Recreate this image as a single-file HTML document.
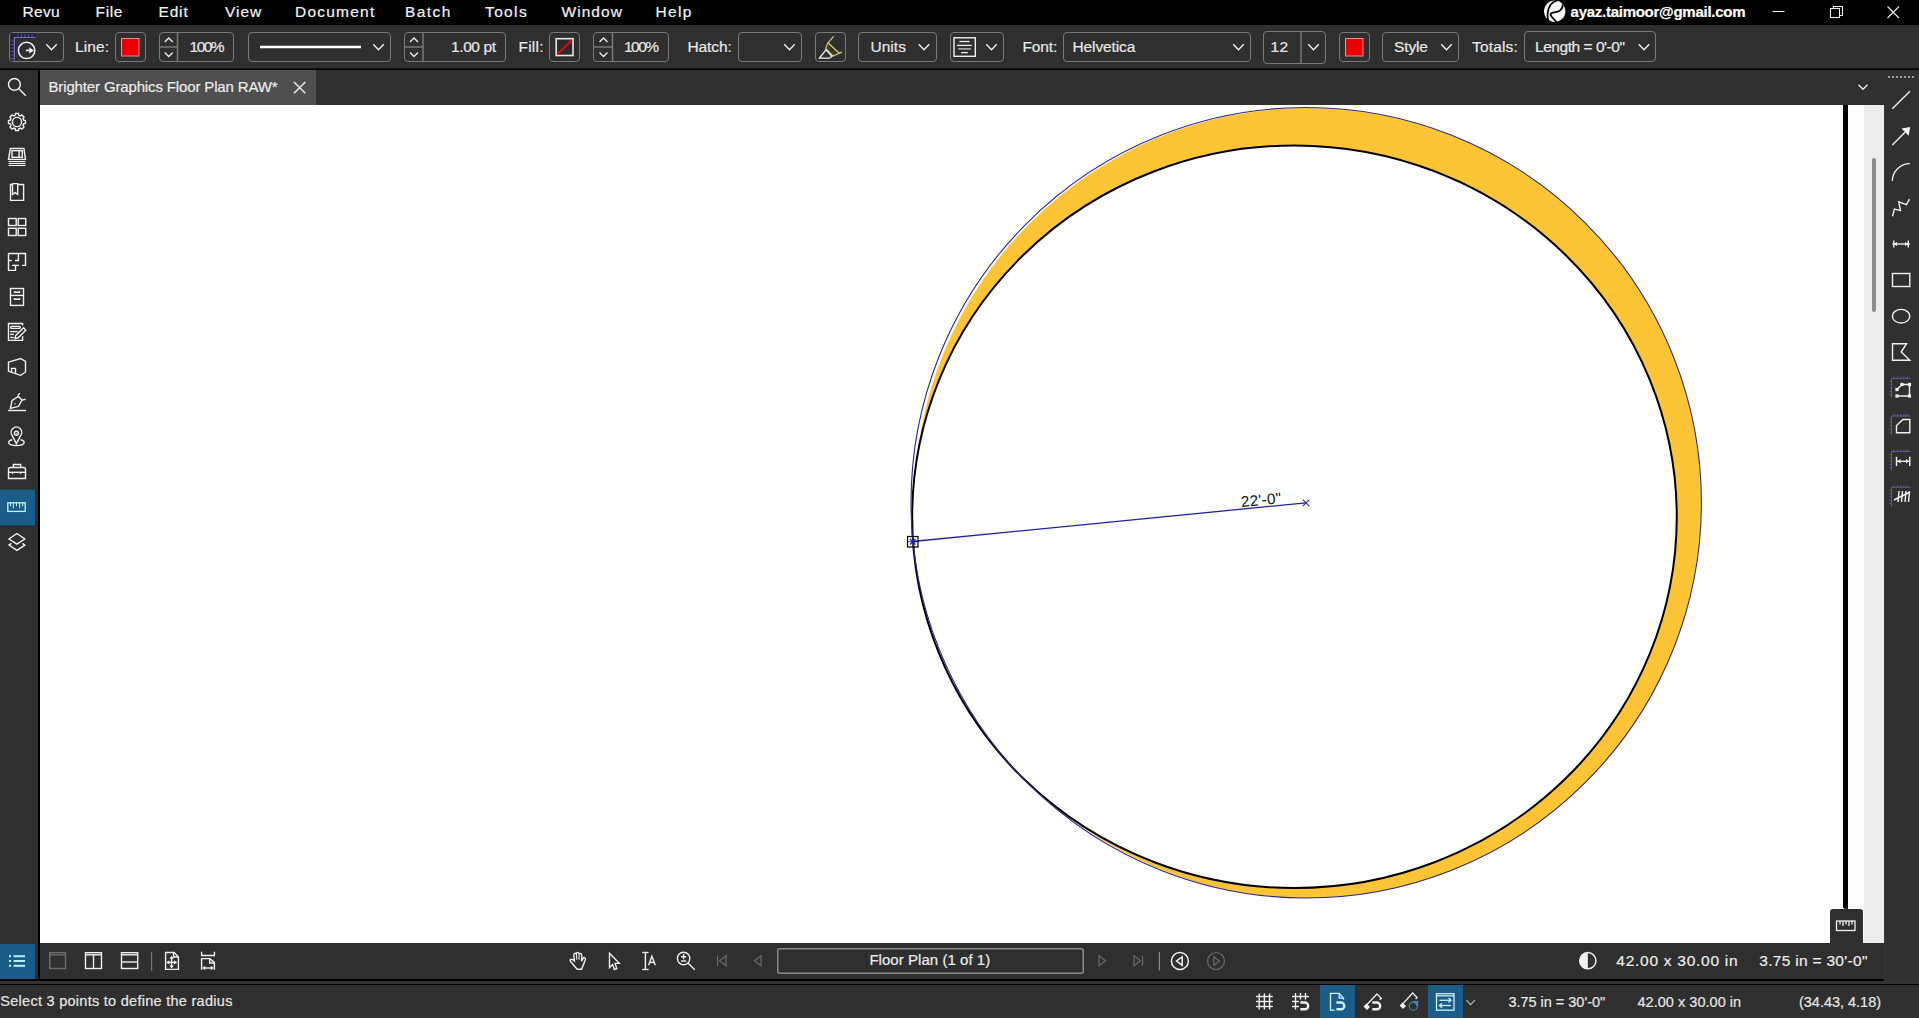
<!DOCTYPE html>
<html><head><meta charset="utf-8">
<style>
*{margin:0;padding:0;box-sizing:border-box}
html,body{width:1919px;height:1018px;overflow:hidden;background:#2f2f2f;font-family:"Liberation Sans",sans-serif;color:#f0f0f0}
.a{position:absolute}
.t{position:absolute;white-space:nowrap;line-height:1;-webkit-text-stroke:0.2px currentColor}
.box{position:absolute;border-style:solid}
svg{position:absolute;overflow:visible}
</style></head><body>
<div class="a" style="left:0px;top:0px;width:1919px;height:25px;background:#000;"></div>
<div class="a" style="left:0px;top:25px;width:1919px;height:44px;background:#2f2f2f;"></div>
<div class="a" style="left:0px;top:68px;width:1919px;height:1px;background:#161616;"></div>
<div class="a" style="left:0px;top:69px;width:1919px;height:1px;background:#000;"></div>
<div class="a" style="left:0px;top:70px;width:38px;height:909px;background:#2f2f2f;"></div>
<div class="a" style="left:38px;top:70px;width:2px;height:915px;background:#000;"></div>
<div class="a" style="left:40px;top:70px;width:1844px;height:35px;background:#303030;"></div>
<div class="a" style="left:40px;top:70px;width:276px;height:35px;background:#4f4f4f;"></div>
<div class="a" style="left:40px;top:105px;width:1804px;height:838px;background:#fff;"></div>
<div class="a" style="left:1843px;top:105px;width:5px;height:803px;background:#000;"></div>
<div class="a" style="left:1848px;top:105px;width:16px;height:838px;background:#fdfdfd;"></div>
<div class="a" style="left:1864px;top:105px;width:20px;height:838px;background:#ececec;"></div>
<div class="a" style="left:1872px;top:157.5px;width:3.5px;height:154.5px;background:#8c8c8c;border-radius:2px"></div>
<div class="a" style="left:1884px;top:70px;width:35px;height:914px;background:#303030;"></div>
<div class="a" style="left:1884px;top:105px;width:1px;height:879px;background:#383838;"></div>
<div class="a" style="left:1830px;top:909px;width:33px;height:34px;background:#2f2f2f;border-radius:3px 3px 0 0"></div>
<div class="a" style="left:40px;top:943px;width:1844px;height:36px;background:#2f2f2f;"></div>
<div class="a" style="left:0px;top:979px;width:1884px;height:2px;background:#000;"></div>
<div class="a" style="left:0px;top:981px;width:1919px;height:3px;background:#333333;"></div>
<div class="a" style="left:0px;top:984px;width:1919px;height:1px;background:#000;"></div>
<div class="a" style="left:0px;top:985px;width:1919px;height:33px;background:#2f2f2f;"></div>
<div class="a" style="left:0px;top:489px;width:35px;height:37px;background:#1f3e55;"></div>
<div class="a" style="left:0px;top:490px;width:35px;height:35px;background:#1b5d88;"></div>
<div class="a" style="left:0px;top:944px;width:35px;height:35px;background:#1b5d88;"></div>
<div class="a" style="left:1320px;top:985px;width:35px;height:33px;background:#1b5d88;"></div>
<div class="a" style="left:1428px;top:985px;width:35px;height:33px;background:#1b5d88;"></div>
<div class="box" style="left:9px;top:32px;width:55px;height:30px;border-color:#797979;border-width:1.7px;border-radius:4px"></div>
<div class="box" style="left:115px;top:32px;width:31px;height:30px;border-color:#797979;border-width:1.7px;border-radius:4px"></div>
<div class="box" style="left:158.5px;top:32px;width:75.5px;height:30px;border-color:#797979;border-width:1.7px;border-radius:4px"></div>
<div class="box" style="left:247.5px;top:32px;width:143.5px;height:30px;border-color:#797979;border-width:1.7px;border-radius:4px"></div>
<div class="box" style="left:403.5px;top:32px;width:102.5px;height:30px;border-color:#797979;border-width:1.7px;border-radius:4px"></div>
<div class="box" style="left:549px;top:32px;width:31px;height:30px;border-color:#797979;border-width:1.7px;border-radius:4px"></div>
<div class="box" style="left:593px;top:32px;width:76px;height:30px;border-color:#797979;border-width:1.7px;border-radius:4px"></div>
<div class="box" style="left:738px;top:32px;width:63.5px;height:30px;border-color:#797979;border-width:1.7px;border-radius:4px"></div>
<div class="box" style="left:814.5px;top:32px;width:31.0px;height:30px;border-color:#797979;border-width:1.7px;border-radius:4px"></div>
<div class="box" style="left:858px;top:32px;width:78.5px;height:30px;border-color:#797979;border-width:1.7px;border-radius:4px"></div>
<div class="box" style="left:949.5px;top:32px;width:54.0px;height:30px;border-color:#797979;border-width:1.7px;border-radius:4px"></div>
<div class="box" style="left:1063px;top:32px;width:187.5px;height:30px;border-color:#797979;border-width:1.7px;border-radius:4px"></div>
<div class="box" style="left:1263px;top:30.5px;width:62.5px;height:33.0px;border-color:#797979;border-width:1.7px;border-radius:4px"></div>
<div class="box" style="left:1338.5px;top:32px;width:31.0px;height:30px;border-color:#797979;border-width:1.7px;border-radius:4px"></div>
<div class="box" style="left:1382px;top:32px;width:76.5px;height:30px;border-color:#797979;border-width:1.7px;border-radius:4px"></div>
<div class="box" style="left:1524px;top:31px;width:131.5px;height:31px;border-color:#797979;border-width:1.7px;border-radius:4px"></div>
<svg style="left:0;top:0" width="1919" height="1018" viewBox="0 0 1919 1018"><line x1="177.5" y1="32" x2="177.5" y2="62" stroke="#797979" stroke-width="1.5"/><line x1="159" y1="47" x2="177.5" y2="47" stroke="#797979" stroke-width="1.5"/><polyline points="164.75,42 168.75,38 172.75,42" fill="none" stroke="#f0f0f0" stroke-width="1.3"/><polyline points="164.75,52.5 168.75,56.5 172.75,52.5" fill="none" stroke="#f0f0f0" stroke-width="1.3"/><line x1="423" y1="32" x2="423" y2="62" stroke="#797979" stroke-width="1.5"/><line x1="404" y1="47" x2="423" y2="47" stroke="#797979" stroke-width="1.5"/><polyline points="410.0,42 414.0,38 418.0,42" fill="none" stroke="#f0f0f0" stroke-width="1.3"/><polyline points="410.0,52.5 414.0,56.5 418.0,52.5" fill="none" stroke="#f0f0f0" stroke-width="1.3"/><line x1="612.5" y1="32" x2="612.5" y2="62" stroke="#797979" stroke-width="1.5"/><line x1="593.5" y1="47" x2="612.5" y2="47" stroke="#797979" stroke-width="1.5"/><polyline points="599.5,42 603.5,38 607.5,42" fill="none" stroke="#f0f0f0" stroke-width="1.3"/><polyline points="599.5,52.5 603.5,56.5 607.5,52.5" fill="none" stroke="#f0f0f0" stroke-width="1.3"/><line x1="1301" y1="31" x2="1301" y2="63" stroke="#797979" stroke-width="1.5"/><polyline points="46.25,44.25 51.5,49.75 56.75,44.25" fill="none" stroke="#f0f0f0" stroke-width="1.4"/><polyline points="373.25,44.25 378.5,49.75 383.75,44.25" fill="none" stroke="#f0f0f0" stroke-width="1.4"/><polyline points="784.25,44.25 789.5,49.75 794.75,44.25" fill="none" stroke="#f0f0f0" stroke-width="1.4"/><polyline points="918.75,44.25 924,49.75 929.25,44.25" fill="none" stroke="#f0f0f0" stroke-width="1.4"/><polyline points="986.25,44.25 991.5,49.75 996.75,44.25" fill="none" stroke="#f0f0f0" stroke-width="1.4"/><polyline points="1233.25,44.25 1238.5,49.75 1243.75,44.25" fill="none" stroke="#f0f0f0" stroke-width="1.4"/><polyline points="1308.25,44.25 1313.5,49.75 1318.75,44.25" fill="none" stroke="#f0f0f0" stroke-width="1.4"/><polyline points="1441.25,44.25 1446.5,49.75 1451.75,44.25" fill="none" stroke="#f0f0f0" stroke-width="1.4"/><polyline points="1638.75,44.25 1644,49.75 1649.25,44.25" fill="none" stroke="#f0f0f0" stroke-width="1.4"/><line x1="260" y1="47" x2="361" y2="47" stroke="#fff" stroke-width="2.6"/><path d="M10.5,33 H35.5 V38.3 H15.2 V60.5 H10.5 Z" fill="#24213f"/><polyline points="35.7,37.5 14.4,37.5 14.4,60.5" fill="none" stroke="#736db0" stroke-width="1.2"/><g stroke="#5f5a98" stroke-width="1" fill="none"><line x1="18" y1="34" x2="18" y2="37"/><line x1="21.5" y1="34" x2="21.5" y2="37"/><line x1="25" y1="34" x2="25" y2="37"/><line x1="28.5" y1="34" x2="28.5" y2="37"/><line x1="32" y1="34" x2="32" y2="37"/><line x1="11.2" y1="41" x2="14" y2="41"/><line x1="11.2" y1="44.5" x2="14" y2="44.5"/><line x1="11.2" y1="48" x2="14" y2="48"/><line x1="11.2" y1="51.5" x2="14" y2="51.5"/><line x1="11.2" y1="55" x2="14" y2="55"/><line x1="11.2" y1="58.5" x2="14" y2="58.5"/></g><circle cx="26.6" cy="50.4" r="8.2" fill="none" stroke="#f0f0f0" stroke-width="1.5"/><line x1="26" y1="50.4" x2="30.5" y2="50.4" stroke="#f0f0f0" stroke-width="1.8"/><polygon points="29.4,47.2 33.9,50.4 29.4,53.6" fill="#f0f0f0"/><rect x="121.5" y="38.5" width="17.5" height="17.5" fill="#ee0000" stroke="#ff8a8a" stroke-width="1"/><rect x="1345.5" y="38.5" width="17.5" height="17.5" fill="#ee0000" stroke="#ff8a8a" stroke-width="1"/><rect x="556.2" y="38.7" width="16.8" height="16.8" fill="#2a2a2a" stroke="#e8e8e8" stroke-width="1.6"/><line x1="557.5" y1="54.3" x2="571.8" y2="40" stroke="#d01010" stroke-width="2.2"/><polygon points="828,42.8 838.8,52.8 842,52.3 833,56 825.6,48.3" fill="#3c3a1e" stroke="#cccc80" stroke-width="1.2"/><line x1="833.6" y1="36.4" x2="828" y2="42.8" stroke="#cccc80" stroke-width="1.2"/><polygon points="819.4,58.2 826.1,49.8 831.9,56.4 829.4,58.2" fill="none" stroke="#f0f0f0" stroke-width="1.3"/><rect x="954" y="37.8" width="21.3" height="18.5" fill="none" stroke="#f0f0f0" stroke-width="1.4"/><g stroke="#f0f0f0" stroke-width="1.3"><line x1="959.5" y1="41.5" x2="969.6" y2="41.5"/><line x1="957.1" y1="45.4" x2="971.8" y2="45.4"/><line x1="958.2" y1="48.9" x2="970.9" y2="48.9" stroke="#c8c8c8"/><line x1="961" y1="52.6" x2="967.9" y2="52.6"/></g></svg>
<svg style="left:0;top:0" width="1919" height="1018" viewBox="0 0 1919 1018"><line x1="1772.5" y1="11.5" x2="1784.5" y2="11.5" stroke="#f0f0f0" stroke-width="1.1"/><rect x="1830.5" y="8.5" width="9" height="9" fill="none" stroke="#f0f0f0" stroke-width="1.1"/><polyline points="1833.5,8.5 1833.5,6.5 1842.5,6.5 1842.5,15.5 1839.5,15.5" fill="none" stroke="#f0f0f0" stroke-width="1.1"/><line x1="1887.5" y1="6.5" x2="1899" y2="18" stroke="#f0f0f0" stroke-width="1.1"/><line x1="1899" y1="6.5" x2="1887.5" y2="18" stroke="#f0f0f0" stroke-width="1.1"/><circle cx="1554.7" cy="11.2" r="10.7" fill="#f4f4f4"/><path d="M1557.5,0.3 C1551,2 1548,8 1547.6,14 C1547.4,17 1547.8,19.5 1548.8,22.5" fill="none" stroke="#000" stroke-width="1.7"/><path d="M1562.8,4.6 C1563,9.5 1558.5,12 1553,12.6 C1550.3,13 1550,14.5 1551.5,16.5 L1557.5,23" fill="none" stroke="#000" stroke-width="1.8"/><path d="M1557.5,-0.5 C1560.5,0.5 1562.5,2.5 1563,5 L1567,5 L1567,-1 Z" fill="#000"/></svg>
<span class="t" style="left:22.4px;top:4.13px;font-size:15.5px;font-weight:400;letter-spacing:0.367px;color:#f2f2f2">Revu</span>
<span class="t" style="left:95.6px;top:4.13px;font-size:15.5px;font-weight:400;letter-spacing:0.633px;color:#f2f2f2">File</span>
<span class="t" style="left:158.5px;top:4.13px;font-size:15.5px;font-weight:400;letter-spacing:0.833px;color:#f2f2f2">Edit</span>
<span class="t" style="left:225.0px;top:4.13px;font-size:15.5px;font-weight:400;letter-spacing:1.0px;color:#f2f2f2">View</span>
<span class="t" style="left:295.0px;top:4.13px;font-size:15.5px;font-weight:400;letter-spacing:1.229px;color:#f2f2f2">Document</span>
<span class="t" style="left:405.0px;top:4.13px;font-size:15.5px;font-weight:400;letter-spacing:1.425px;color:#f2f2f2">Batch</span>
<span class="t" style="left:485.0px;top:4.13px;font-size:15.5px;font-weight:400;letter-spacing:1.375px;color:#f2f2f2">Tools</span>
<span class="t" style="left:561.6px;top:4.13px;font-size:15.5px;font-weight:400;letter-spacing:1.02px;color:#f2f2f2">Window</span>
<span class="t" style="left:655.6px;top:4.13px;font-size:15.5px;font-weight:400;letter-spacing:1.3px;color:#f2f2f2">Help</span>
<span class="t" style="left:1570.6px;top:3.95px;font-size:15px;font-weight:700;letter-spacing:-0.267px;color:#ffffff">ayaz.taimoor@gmail.com</span>
<span class="t" style="left:75.0px;top:38.62px;font-size:15.5px;font-weight:400;letter-spacing:0.125px;color:#e8e8e8">Line:</span>
<span class="t" style="left:189.6px;top:38.62px;font-size:15.5px;font-weight:400;letter-spacing:-1.533px;color:#e8e8e8">100%</span>
<span class="t" style="left:451.0px;top:38.62px;font-size:15.5px;font-weight:400;letter-spacing:-0.4px;color:#e8e8e8">1.00 pt</span>
<span class="t" style="left:518.4px;top:38.62px;font-size:15.5px;font-weight:400;letter-spacing:0.275px;color:#e8e8e8">Fill:</span>
<span class="t" style="left:624.0px;top:38.62px;font-size:15.5px;font-weight:400;letter-spacing:-1.5px;color:#e8e8e8">100%</span>
<span class="t" style="left:687.5px;top:38.62px;font-size:15.5px;font-weight:400;letter-spacing:-0.1px;color:#e8e8e8">Hatch:</span>
<span class="t" style="left:870.5px;top:38.62px;font-size:15.5px;font-weight:400;letter-spacing:0.025px;color:#e8e8e8">Units</span>
<span class="t" style="left:1022.5px;top:38.62px;font-size:15.5px;font-weight:400;letter-spacing:-0.125px;color:#e8e8e8">Font:</span>
<span class="t" style="left:1072.5px;top:38.62px;font-size:15.5px;font-weight:400;letter-spacing:-0.113px;color:#e8e8e8">Helvetica</span>
<span class="t" style="left:1270.5px;top:38.62px;font-size:15.5px;font-weight:400;letter-spacing:0.5px;color:#e8e8e8">12</span>
<span class="t" style="left:1394.0px;top:38.62px;font-size:15.5px;font-weight:400;letter-spacing:-0.125px;color:#e8e8e8">Style</span>
<span class="t" style="left:1472.0px;top:38.62px;font-size:15.5px;font-weight:400;letter-spacing:0.167px;color:#e8e8e8">Totals:</span>
<span class="t" style="left:1535.0px;top:38.62px;font-size:15.5px;font-weight:400;letter-spacing:-0.462px;color:#e8e8e8">Length = 0&#x27;-0&quot;</span>
<span class="t" style="left:48.5px;top:79.25px;font-size:15px;font-weight:400;letter-spacing:-0.144px;color:#ececec">Brighter Graphics Floor Plan RAW*</span>
<span class="t" style="left:869.4px;top:952.05px;font-size:15px;font-weight:400;letter-spacing:0.044px;color:#ececec">Floor Plan (1 of 1)</span>
<span class="t" style="left:1616.3px;top:952.53px;font-size:15.5px;font-weight:400;letter-spacing:0.733px;color:#ececec">42.00 x 30.00 in</span>
<span class="t" style="left:1759.3px;top:952.53px;font-size:15.5px;font-weight:400;letter-spacing:0.293px;color:#ececec">3.75 in = 30&#x27;-0&quot;</span>
<span class="t" style="left:0.25px;top:994.27px;font-size:14.5px;font-weight:400;letter-spacing:0.276px;color:#e6e6e6">Select 3 points to define the radius</span>
<span class="t" style="left:1508.4px;top:994.57px;font-size:14.5px;font-weight:400;letter-spacing:-0.013px;color:#e6e6e6">3.75 in = 30&#x27;-0&quot;</span>
<span class="t" style="left:1637.5px;top:994.57px;font-size:14.5px;font-weight:400;letter-spacing:0.033px;color:#e6e6e6">42.00 x 30.00 in</span>
<span class="t" style="left:1799.0px;top:994.57px;font-size:14.5px;font-weight:400;letter-spacing:-0.017px;color:#e6e6e6">(34.43, 4.18)</span>
<svg style="left:0;top:0" width="1919" height="1018" viewBox="0 0 1919 1018"><g fill="none" stroke="#f0f0f0" stroke-width="1.4" stroke-width="1.3"><line x1="294" y1="82" x2="305.3" y2="93.3"/><line x1="305.3" y1="82" x2="294" y2="93.3"/></g><polyline points="1858.5,84.75 1863,89.25 1867.5,84.75" fill="none" stroke="#f0f0f0" stroke-width="1.3"/><rect x="1888" y="76" width="2" height="2" fill="#9a9a9a"/><rect x="1892" y="76" width="2" height="2" fill="#9a9a9a"/><rect x="1896" y="76" width="2" height="2" fill="#9a9a9a"/><rect x="1900" y="76" width="2" height="2" fill="#9a9a9a"/><rect x="1904" y="76" width="2" height="2" fill="#9a9a9a"/><rect x="1908" y="76" width="2" height="2" fill="#9a9a9a"/><rect x="1912" y="76" width="2" height="2" fill="#9a9a9a"/><g fill="none" stroke="#f0f0f0" stroke-width="1.4"><circle cx="14.4" cy="84.4" r="5.9"/><line x1="18.6" y1="88.6" x2="25.8" y2="95.8"/><polygon points="15.10,115.37 15.51,113.53 18.49,113.53 18.90,115.37 20.35,115.97 21.93,114.96 24.04,117.07 23.03,118.65 23.63,120.10 25.47,120.51 25.47,123.49 23.63,123.90 23.03,125.35 24.04,126.93 21.93,129.04 20.35,128.03 18.90,128.63 18.49,130.47 15.51,130.47 15.10,128.63 13.65,128.03 12.07,129.04 9.96,126.93 10.97,125.35 10.37,123.90 8.53,123.49 8.53,120.51 10.37,120.10 10.97,118.65 9.96,117.07 12.07,114.96 13.65,115.97"/><circle cx="17" cy="122" r="4.6"/><polygon points="10.4,148.5 23.9,148.5 25.5,159.4 8.5,159.4"/><rect x="12" y="150.7" width="10.3" height="6.6"/><line x1="19.1" y1="150.7" x2="19.1" y2="157.3"/><g stroke-width="1.1"><line x1="8.5" y1="161.5" x2="25.5" y2="161.5"/><line x1="8.5" y1="163.5" x2="25.5" y2="163.5"/><line x1="8.5" y1="165.5" x2="25.5" y2="165.5"/></g><polyline points="17.7,184.5 23.6,184.5 23.6,200.4 10.5,200.4 10.5,184.5 12.5,184.5"/><polyline points="12.5,183.6 12.5,194.4 15.1,192.6 17.7,194.4 17.7,183.6 12.5,183.6"/><rect x="8.5" y="218.5" width="7.7" height="7"/><rect x="18.2" y="218.5" width="7.5" height="7"/><rect x="8.5" y="228.3" width="7.7" height="7.2"/><rect x="18.2" y="228.3" width="7.5" height="7.2"/><polyline points="8.5,253.5 25.5,253.5 25.5,265.4 22,265.4"/><polyline points="8.5,253.5 8.5,270.4 15.5,270.4 15.5,265.4"/><line x1="12" y1="265.4" x2="18.9" y2="265.4"/><polyline points="18.4,253.5 18.4,260.5 15,260.5"/><line x1="8.5" y1="260.5" x2="11.8" y2="260.5"/><rect x="10.5" y="288.5" width="13" height="16.9"/><line x1="10.5" y1="295.4" x2="23.5" y2="295.4"/><polyline points="14.5,291 14.5,292.3 19.5,292.3 19.5,291"/><polyline points="14.5,298 14.5,299.3 19.5,299.3 19.5,298"/><polyline points="22.6,325.5 22.6,323.5 8.5,323.5 8.5,340.4 22.6,340.4 22.6,336.3"/><rect x="10.7" y="326.4" width="9.6" height="2" rx="0.8"/><line x1="10.2" y1="331.6" x2="17.7" y2="331.6"/><line x1="10.2" y1="334.4" x2="13.7" y2="334.4"/><line x1="10.2" y1="337.5" x2="13.7" y2="337.5"/><polygon points="14.9,338.6 15.8,335.4 23.6,327.8 25.8,330.3 18.2,337.8"/><polygon points="8.5,362.1 20.6,358.5 25.5,361.4 25.5,372 20.6,375.3 8.5,371.3"/><polyline points="11.6,372.3 11.6,368.4 15.5,368.4 15.5,373.6"/><line x1="8.1" y1="410.5" x2="26" y2="410.5"/><polygon points="10.4,408.4 12.1,400.4 18.4,396.4 22,400.1 18.4,406.5"/><line x1="17.6" y1="395.4" x2="19.8" y2="393.2"/><line x1="22" y1="400.1" x2="25.6" y2="399.3"/><path d="M16.4,443.6 L12.2,435.6 A5.3,5.3 0 1 1 20.6,435.6 Z"/><circle cx="16.4" cy="433.3" r="2"/><path d="M12.2,439.8 C7,440.8 6.8,445.5 16.4,445.5 C26,445.5 25.8,440.8 20.6,439.8"/><path d="M8.5,478.5 L8.5,469.5 Q8.5,467.5 10.5,467.5 L23.5,467.5 Q25.5,467.5 25.5,469.5 L25.5,478.5 Z"/><polyline points="13.4,467.5 13.4,464.5 20.7,464.5 20.7,467.5"/><line x1="8.5" y1="472.3" x2="25.5" y2="472.3"/><line x1="12.5" y1="472.3" x2="12.5" y2="474"/><line x1="20.5" y1="472.3" x2="20.5" y2="474"/><polygon points="16.9,533.5 24.8,539 16.9,544.2 9,539"/><polyline points="11.4,543.4 9,545.1 16.9,550.3 24.8,545.1 22.5,543.4"/></g><rect x="14.2" y="403.2" width="1.4" height="1.4" fill="#bbb"/><circle cx="16.4" cy="433.3" r="0.6" fill="#f0f0f0"/><g fill="none" stroke="#c0f4ff"><rect x="7.8" y="502.8" width="17.4" height="8.6" stroke-width="1.3"/><line x1="10.5" y1="503" x2="10.5" y2="506.2" stroke-width="1"/><line x1="13.3" y1="503" x2="13.3" y2="508.2" stroke-width="1"/><line x1="16.5" y1="503" x2="16.5" y2="506.2" stroke-width="1"/><line x1="19.7" y1="503" x2="19.7" y2="508.2" stroke-width="1"/><line x1="22.7" y1="503" x2="22.7" y2="506.2" stroke-width="1"/></g><g fill="#b8ecff"><rect x="9" y="955.2" width="2" height="2"/><rect x="13.5" y="955.2" width="11.5" height="2"/><rect x="9" y="960" width="2" height="2"/><rect x="13.5" y="960" width="11.5" height="2"/><rect x="9" y="964.8" width="2" height="2"/><rect x="13.5" y="964.8" width="11.5" height="2"/></g><g fill="none" stroke="#f0f0f0" stroke-width="1.4"><line x1="1892.3" y1="108.7" x2="1909.9" y2="91.2"/><line x1="1892.3" y1="145" x2="1905" y2="132.3"/><path d="M1892.3,181 A17.6,17.6 0 0 1 1909.9,163.6"/><polyline points="1892.5,216.3 1894.4,209 1900.5,210.6 1898.7,201.9 1906.4,204.6 1909.5,199.2"/><line x1="1892.3" y1="244" x2="1909.9" y2="244"/><line x1="1893.8" y1="240.5" x2="1893.8" y2="247.5"/><line x1="1908.3" y1="240.5" x2="1908.3" y2="247.5"/><rect x="1892.5" y="273.5" width="17.3" height="13"/><ellipse cx="1901.1" cy="316.2" rx="8.7" ry="6.8"/><polygon points="1892.5,343.8 1906.5,343.8 1901.2,352 1909.8,360.3 1892.5,360.3"/><polyline points="1897,389.5 1902,384.5 1909.5,384.5 1909.5,396 1897,396"/><polygon points="1896.5,425.5 1903,419.5 1909.8,419.5 1909.8,432.8 1896.5,432.8"/><line x1="1896.5" y1="456.8" x2="1896.5" y2="466"/><line x1="1909.8" y1="456.8" x2="1909.8" y2="466"/><line x1="1897" y1="461.3" x2="1909" y2="461.3"/><line x1="1899" y1="491" x2="1898" y2="502"/><line x1="1902.5" y1="491" x2="1901.5" y2="502"/><line x1="1906" y1="491" x2="1905" y2="502"/><line x1="1909.5" y1="491" x2="1908.5" y2="502"/><line x1="1894" y1="500" x2="1910" y2="492"/></g><polygon points="1901.5,128.5 1910.2,127 1908.7,135.7" fill="#f0f0f0"/><polygon points="1893.5,244 1897,242 1897,246" fill="#f0f0f0"/><polygon points="1908.6,244 1905,242 1905,246" fill="#f0f0f0"/><polygon points="1897.3,461.3 1900.5,459 1900.5,463.6" fill="#f0f0f0"/><polygon points="1909.2,461.3 1906,459 1906,463.6" fill="#f0f0f0"/><rect x="1895.4" y="387.9" width="3.2" height="3.2" fill="#f0f0f0"/><rect x="1900.4" y="382.9" width="3.2" height="3.2" fill="#f0f0f0"/><rect x="1907.9" y="382.9" width="3.2" height="3.2" fill="#f0f0f0"/><rect x="1907.9" y="394.4" width="3.2" height="3.2" fill="#f0f0f0"/><rect x="1895.4" y="394.4" width="3.2" height="3.2" fill="#f0f0f0"/><g stroke="#605a9c" stroke-width="1" fill="none"><polyline points="1910.5,378.5 1891.5,378.5 1891.5,397.5"/><line x1="1894.0" y1="376.5" x2="1894.0" y2="378.5"/><line x1="1897.3" y1="376.5" x2="1897.3" y2="378.5"/><line x1="1900.6" y1="376.5" x2="1900.6" y2="378.5"/><line x1="1903.9" y1="376.5" x2="1903.9" y2="378.5"/><line x1="1907.2" y1="376.5" x2="1907.2" y2="378.5"/><line x1="1889.5" y1="381.5" x2="1891.5" y2="381.5"/><line x1="1889.5" y1="384.8" x2="1891.5" y2="384.8"/><line x1="1889.5" y1="388.1" x2="1891.5" y2="388.1"/><line x1="1889.5" y1="391.4" x2="1891.5" y2="391.4"/><line x1="1889.5" y1="394.7" x2="1891.5" y2="394.7"/></g><g stroke="#605a9c" stroke-width="1" fill="none"><polyline points="1910.5,416 1891.5,416 1891.5,435"/><line x1="1894.0" y1="414" x2="1894.0" y2="416"/><line x1="1897.3" y1="414" x2="1897.3" y2="416"/><line x1="1900.6" y1="414" x2="1900.6" y2="416"/><line x1="1903.9" y1="414" x2="1903.9" y2="416"/><line x1="1907.2" y1="414" x2="1907.2" y2="416"/><line x1="1889.5" y1="419.0" x2="1891.5" y2="419.0"/><line x1="1889.5" y1="422.3" x2="1891.5" y2="422.3"/><line x1="1889.5" y1="425.6" x2="1891.5" y2="425.6"/><line x1="1889.5" y1="428.9" x2="1891.5" y2="428.9"/><line x1="1889.5" y1="432.2" x2="1891.5" y2="432.2"/></g><g stroke="#605a9c" stroke-width="1" fill="none"><polyline points="1910.5,451.5 1891.5,451.5 1891.5,470.5"/><line x1="1894.0" y1="449.5" x2="1894.0" y2="451.5"/><line x1="1897.3" y1="449.5" x2="1897.3" y2="451.5"/><line x1="1900.6" y1="449.5" x2="1900.6" y2="451.5"/><line x1="1903.9" y1="449.5" x2="1903.9" y2="451.5"/><line x1="1907.2" y1="449.5" x2="1907.2" y2="451.5"/><line x1="1889.5" y1="454.5" x2="1891.5" y2="454.5"/><line x1="1889.5" y1="457.8" x2="1891.5" y2="457.8"/><line x1="1889.5" y1="461.1" x2="1891.5" y2="461.1"/><line x1="1889.5" y1="464.4" x2="1891.5" y2="464.4"/><line x1="1889.5" y1="467.7" x2="1891.5" y2="467.7"/></g><g stroke="#605a9c" stroke-width="1" fill="none"><polyline points="1910.5,487.3 1891.5,487.3 1891.5,506.3"/><line x1="1894.0" y1="485.3" x2="1894.0" y2="487.3"/><line x1="1897.3" y1="485.3" x2="1897.3" y2="487.3"/><line x1="1900.6" y1="485.3" x2="1900.6" y2="487.3"/><line x1="1903.9" y1="485.3" x2="1903.9" y2="487.3"/><line x1="1907.2" y1="485.3" x2="1907.2" y2="487.3"/><line x1="1889.5" y1="490.3" x2="1891.5" y2="490.3"/><line x1="1889.5" y1="493.6" x2="1891.5" y2="493.6"/><line x1="1889.5" y1="496.90000000000003" x2="1891.5" y2="496.90000000000003"/><line x1="1889.5" y1="500.2" x2="1891.5" y2="500.2"/><line x1="1889.5" y1="503.5" x2="1891.5" y2="503.5"/></g><g fill="none" stroke="#f0f0f0" stroke-width="1.4"><g stroke="#6e6e6e"><rect x="49.7" y="952.7" width="15.8" height="15.8"/><line x1="49.7" y1="954.8" x2="65.5" y2="954.8"/></g><rect x="85.5" y="952.7" width="16" height="15.8"/><line x1="85.5" y1="954.8" x2="101.5" y2="954.8"/><line x1="93.5" y1="954.8" x2="93.5" y2="968.5"/><rect x="121.5" y="952.7" width="16.2" height="15.8"/><line x1="121.5" y1="954.8" x2="137.7" y2="954.8"/><line x1="121.5" y1="962" x2="137.7" y2="962"/><line x1="151.6" y1="952.2" x2="151.6" y2="970.8" stroke="#777" stroke-width="1.2"/><polygon points="165.6,952.5 174.1,952.5 178.4,956.8 178.4,969.4 165.6,969.4"/><polyline points="173.6,952.5 173.6,957 178.4,957"/><line x1="171.6" y1="957.5" x2="171.6" y2="967.5"/><line x1="167" y1="962.4" x2="176.5" y2="962.4"/><polygon points="171.6,955.8 169.4,958.8 173.8,958.8" fill="#f0f0f0" stroke="none"/><polygon points="171.6,968.6 169.4,965.6 173.8,965.6" fill="#f0f0f0" stroke="none"/><polygon points="166.4,962.4 169.4,960.2 169.4,964.6" fill="#f0f0f0" stroke="none"/><polygon points="177,962.4 174,960.2 174,964.6" fill="#f0f0f0" stroke="none"/><polyline points="201.6,951.8 201.6,955.5 214.4,955.5 214.4,951.8"/><polyline points="201.6,969.8 201.6,958.6 210,958.6 214.4,962.4 214.4,969.8"/><polyline points="209.7,958.6 209.7,963 214.4,963"/><line x1="203" y1="968" x2="213" y2="968"/><polygon points="202.2,968 205.2,965.8 205.2,970.2" fill="#f0f0f0" stroke="none"/><polygon points="213.8,968 210.8,965.8 210.8,970.2" fill="#f0f0f0" stroke="none"/><path d="M570.2,961 L575.9,967.8 L577.3,969.3 L581.6,969.3 L585.4,959.5 C585.8,957.4 583.6,956.8 583,958.5 L581.6,961.2 L581.8,955.5 C581.8,953.2 579.6,952.8 579.1,954.3 C578.8,951.8 576.6,951.8 576.4,954 C575.8,952.8 573.6,953.2 573.8,955.2 L574.5,961 L572.6,959.6 C571.4,958.8 569.5,959.6 570.2,961 Z"/><line x1="576.4" y1="954.5" x2="576.8" y2="959.8" stroke-width="1.1"/><line x1="579.1" y1="954.5" x2="579.1" y2="959.8" stroke-width="1.1"/><polygon points="609.5,953.2 619.3,963.3 615,963.4 616.8,968.5 614.3,969.5 612.6,964.5 609.5,967.6"/><line x1="645.4" y1="952.5" x2="645.4" y2="969.5"/><line x1="642.3" y1="952.5" x2="648.6" y2="952.5"/><line x1="642.3" y1="969.5" x2="648.6" y2="969.5"/><polyline points="648.6,965.2 651.9,956.3 655.3,965.2"/><line x1="649.7" y1="962.4" x2="654.1" y2="962.4"/><circle cx="683.6" cy="958.5" r="6.2"/><line x1="688" y1="962.9" x2="694.8" y2="969.7"/><line x1="681" y1="956.7" x2="686.2" y2="956.7"/><line x1="683.6" y1="954.1" x2="683.6" y2="959.3"/><line x1="681" y1="961" x2="686.2" y2="961"/></g><g fill="none" stroke="#6a6a6a" stroke-width="1.2"><line x1="717.5" y1="955.5" x2="717.5" y2="966"/><polygon points="726,955.8 719.5,960.8 726,965.8"/><polygon points="761,955.8 754.5,960.8 761,965.8"/><polygon points="1099,955.8 1105.5,960.8 1099,965.8"/><polygon points="1134,955.8 1140.5,960.8 1134,965.8"/><line x1="1142.5" y1="955.5" x2="1142.5" y2="966"/><circle cx="1216" cy="961" r="8.5"/><polygon points="1213.8,956.8 1219.5,961 1213.8,965.2"/></g><line x1="1159.4" y1="952" x2="1159.4" y2="970.6" stroke="#8a8a8a" stroke-width="1.2"/><g fill="none" stroke="#f0f0f0" stroke-width="1.5"><circle cx="1179.9" cy="961" r="8.5"/><polygon points="1182.2,956.8 1176.5,961 1182.2,965.2"/></g><rect x="777.75" y="948.75" width="305.5" height="24.5" rx="2" fill="none" stroke="#8a8a8a" stroke-width="1.5"/><circle cx="1587.8" cy="960.7" r="8.1" fill="none" stroke="#f0f0f0" stroke-width="1.5"/><path d="M1587.8,952.6 A8.1,8.1 0 0 0 1587.8,968.8 Z" fill="#f0f0f0"/><g fill="none" stroke="#f0f0f0" stroke-width="1.3"><rect x="1836.5" y="921" width="18.5" height="9.5"/><line x1="1840" y1="921" x2="1840" y2="924.5"/><line x1="1843" y1="921" x2="1843" y2="926"/><line x1="1846" y1="921" x2="1846" y2="924.5"/><line x1="1849" y1="921" x2="1849" y2="926"/><line x1="1852" y1="921" x2="1852" y2="924.5"/></g><g fill="none" stroke="#f0f0f0" stroke-width="1.4" stroke-width="1.3"><line x1="1259.2" y1="993.5" x2="1259.2" y2="1009.5"/><line x1="1264.4" y1="993.5" x2="1264.4" y2="1009.5"/><line x1="1269.6" y1="993.5" x2="1269.6" y2="1009.5"/><line x1="1256" y1="996.5" x2="1272.8" y2="996.5"/><line x1="1256" y1="1001.5" x2="1272.8" y2="1001.5"/><line x1="1256" y1="1006.5" x2="1272.8" y2="1006.5"/><line x1="1295.5" y1="993" x2="1295.5" y2="1009.5"/><line x1="1300.5" y1="993" x2="1300.5" y2="999.5"/><line x1="1305.5" y1="993" x2="1305.5" y2="999.5"/><line x1="1292" y1="996.5" x2="1309" y2="996.5"/><line x1="1292" y1="1001.5" x2="1299" y2="1001.5"/><line x1="1292" y1="1006.5" x2="1299" y2="1006.5"/></g><path d="M1300.3,1001.3 H1304.8 A4.6,4.6 0 0 1 1304.8,1010.5 H1300.3 V1008.0999999999999 H1304.8 A2.2,2.2 0 0 0 1304.8,1003.6999999999999 H1300.3 Z" fill="#f0f0f0"/><g fill="none" stroke="#c8f4ff" stroke-width="1.3"><polyline points="1334.7,1010.2 1330.5,1010.2 1330.5,993.4 1339.2,993.4 1343.5,998.2 1343.5,999.8"/><polyline points="1339.2,993.4 1339.2,998.2 1343.5,998.2"/></g><path d="M1336.4,1001.3 H1340.9 A4.6,4.6 0 0 1 1340.9,1010.5 H1336.4 V1008.0999999999999 H1340.9 A2.2,2.2 0 0 0 1340.9,1003.6999999999999 H1336.4 Z" fill="#c8f4ff"/><g fill="none" stroke="#f0f0f0" stroke-width="1.3"><polyline points="1367,1004.5 1377,994 1381.3,998.4 1379.6,999.6"/></g><polygon points="1366.5,1003.5 1370,1007 1367,1010 1363.5,1006.5" fill="#f0f0f0"/><path d="M1372.3,1001.3 H1376.8 A4.6,4.6 0 0 1 1376.8,1010.5 H1372.3 V1008.0999999999999 H1376.8 A2.2,2.2 0 0 0 1376.8,1003.6999999999999 H1372.3 Z" fill="#f0f0f0"/><g fill="none" stroke="#f0f0f0" stroke-width="1.3"><polyline points="1403,1003.6 1412.6,993 1417.1,997.5 1415.6,999"/></g><polygon points="1402.6,1002.6 1406,1006 1403,1009 1399.6,1005.6" fill="#f0f0f0"/><circle cx="1413.3" cy="1006.2" r="4.1" fill="none" stroke="#3f7f95" stroke-width="1.3"/><path d="M1413.3,1002.1 A4.1,4.1 0 0 1 1417.4,1006.2" fill="none" stroke="#3d86c6" stroke-width="1.8"/><polygon points="1412.5,1001 1418.5,1001 1417.5,1006" fill="#3d86c6"/><g fill="none" stroke="#c8f0ff" stroke-width="1.3"><rect x="1436.5" y="993.7" width="17.5" height="16.5"/><line x1="1436.5" y1="995.8" x2="1454" y2="995.8"/><line x1="1439.5" y1="1000.3" x2="1451" y2="1000.3"/><polyline points="1448.5,998 1451,1000.3 1448.5,1002.6"/><line x1="1439.5" y1="1005.5" x2="1451" y2="1005.5"/><polyline points="1442,1003.2 1439.5,1005.5 1442,1007.8"/></g><polyline points="1466.35,1000.15 1470.6,1004.65 1474.85,1000.15" fill="none" stroke="#bbbbbb" stroke-width="1.2"/></svg>
<svg style="left:0;top:0" width="1919" height="1018" viewBox="0 0 1919 1018"><ellipse cx="1307.6" cy="503" rx="393.4" ry="395" fill="#fdc536"/><ellipse cx="1294.47" cy="516.77" rx="382.3" ry="371.3" fill="#fff" stroke="#000" stroke-width="2"/><circle cx="1306.2" cy="502.75" r="395.2" fill="none" stroke="#2e2a80" stroke-width="1.1"/><line x1="912.5" y1="541.5" x2="1306" y2="502.8" stroke="#23239a" stroke-width="1.3"/><rect x="907.5" y="536.5" width="10.5" height="10.5" fill="none" stroke="#000" stroke-width="1.2"/><line x1="907.5" y1="541.7" x2="918" y2="541.7" stroke="#000" stroke-width="0.8"/><g stroke="#1f1fc0" stroke-width="1.3"><line x1="910" y1="539" x2="915.5" y2="544.5"/><line x1="915.5" y1="539" x2="910" y2="544.5"/></g><g stroke="#2424b8" stroke-width="1.1"><line x1="1302.8" y1="499.6" x2="1309.3" y2="506.1"/><line x1="1309.3" y1="499.6" x2="1302.8" y2="506.1"/></g><text x="1241.5" y="507" font-family="Liberation Sans" font-size="15.2" letter-spacing="0.3" fill="#111" transform="rotate(-5.6 1241.5 507)">22'-0"</text></svg>
</body></html>
